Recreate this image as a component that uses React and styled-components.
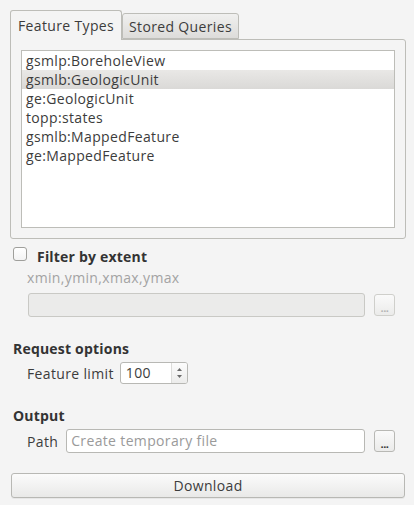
import React from "react";
import styled, { createGlobalStyle } from "styled-components";

const GlobalStyle = createGlobalStyle`
  html, body {
    margin: 0;
    padding: 0;
    background: #f4f4f4;
  }
  body {
    font-family: "Open Sans", "Noto Sans", sans-serif;
    font-size: 14px;
    letter-spacing: 0.35px;
    color: #3c3c3c;
  }
`;

const Panel = styled.div`
  width: 414px;
  height: 505px;
  box-sizing: border-box;
  padding: 10px 8px 0 10px;
  background: #f4f4f4;
  display: flex;
  flex-direction: column;
`;

const TabBar = styled.div`
  display: flex;
  align-items: flex-end;
  height: 29px;
  position: relative;
  z-index: 1;
`;

const Tab = styled.div`
  box-sizing: border-box;
  height: ${(p) => (p.active ? "30px" : "26px")};
  padding: 0 ${(p) => (p.active ? "7px" : "6px")};
  margin-bottom: ${(p) => (p.active ? "-1px" : "0")};
  display: flex;
  align-items: center;
  border: 1px solid #bdbdb8;
  border-bottom: ${(p) => (p.active ? "none" : "1px solid #bdbdb8")};
  border-radius: 3px 3px 0 0;
  background: ${(p) =>
    p.active ? "#f4f4f4" : "linear-gradient(#f0f0ef, #dddcda)"};
  padding-bottom: ${(p) => (p.active ? "1px" : "0")};
  white-space: nowrap;
`;

const TabPane = styled.div`
  box-sizing: border-box;
  height: 200px;
  border: 1px solid #bdbdb8;
  border-radius: 0 3px 3px 3px;
  padding: 10px;
  background: #f4f4f4;
`;

const List = styled.div`
  box-sizing: border-box;
  height: 178px;
  border: 1px solid #bdbdb8;
  background: #fff;
  display: flex;
  flex-direction: column;
`;

const ListItem = styled.div`
  height: 19px;
  line-height: 19px;
  padding-left: 4px;
  white-space: nowrap;
  background: ${(p) =>
    p.selected ? "linear-gradient(#e9e8e6, #dad9d7)" : "transparent"};
`;

const FilterRow = styled.div`
  display: flex;
  align-items: flex-start;
  margin-top: 8px;
  margin-left: 3px;
  height: 18px;
`;

const Check = styled.span`
  box-sizing: border-box;
  width: 14px;
  height: 14px;
  border: 1px solid #9f9f9b;
  border-radius: 3px;
  background: linear-gradient(#ffffff, #f3f3f3);
`;

const Title = styled.div`
  font-weight: bold;
  font-size: 14px;
  letter-spacing: 0.2px;
  line-height: 18px;
  color: #333;
  margin-left: ${(p) => p.indent || 0}px;
  margin-top: ${(p) => p.top || 0}px;
`;

const Hint = styled.div`
  line-height: 18px;
  color: #a3a3a3;
  margin: 4px 0 0 17px;
`;

const FieldRow = styled.div`
  display: flex;
  align-items: center;
  height: ${(p) => p.h || 24}px;
  margin-top: ${(p) => p.top}px;
  padding-left: ${(p) => p.indent}px;
  padding-right: 11px;
  gap: 8px;
`;

const Label = styled.span`
  white-space: nowrap;
`;

const TextField = styled.div`
  box-sizing: border-box;
  flex: 1;
  height: 24px;
  line-height: 22px;
  border: 1px solid ${(p) => (p.disabled ? "#c9c9c5" : "#b8b8b4")};
  border-radius: 3px;
  background: ${(p) => (p.disabled ? "#ebebea" : "#ffffff")};
  color: #9a9a9a;
  padding-left: 4px;
  white-space: nowrap;
  overflow: hidden;
`;

const DotsButton = styled.div`
  box-sizing: border-box;
  width: 21px;
  height: 22px;
  margin-left: 1px;
  border: 1px solid ${(p) => (p.disabled ? "#cfcfcb" : "#b8b8b4")};
  border-radius: 3px;
  background: linear-gradient(#fafafa, #ebebea);
  display: flex;
  align-items: center;
  justify-content: center;
  font-size: 11px;
  font-weight: bold;
  letter-spacing: -0.5px;
  color: ${(p) => (p.disabled ? "#b4b4b4" : "#333")};
  padding-top: 4px;
`;

const SpinBox = styled.div`
  box-sizing: border-box;
  width: 68px;
  height: 22px;
  border: 1px solid #b8b8b4;
  border-radius: 3px;
  background: #fff;
  display: flex;
  margin-left: -2px;
`;

const SpinValue = styled.span`
  flex: 1;
  line-height: 20px;
  padding-left: 5px;
`;

const SpinArrows = styled.span`
  width: 15px;
  border-left: 1px solid #dcdcda;
  background: linear-gradient(#fcfcfc, #ececeb);
  display: flex;
  flex-direction: column;
  align-items: center;
  justify-content: center;
  gap: 4px;
  border-radius: 0 2px 2px 0;
`;

const DownloadButton = styled.div`
  box-sizing: border-box;
  height: 25px;
  margin: 20px 1px 0 1px;
  border: 1px solid #b8b8b4;
  border-radius: 3px;
  background: linear-gradient(#fbfbfb, #e9e9e8);
  display: flex;
  align-items: center;
  justify-content: center;
  box-shadow: 0 1px 0 rgba(0, 0, 0, 0.05);
`;

const featureTypes = [
  "gsmlp:BoreholeView",
  "gsmlb:GeologicUnit",
  "ge:GeologicUnit",
  "topp:states",
  "gsmlb:MappedFeature",
  "ge:MappedFeature",
];

const Arrow = ({ up }) => (
  <svg width="5" height="3" viewBox="0 0 5 3">
    <path d={up ? "M0 3 L2.5 0 L5 3 Z" : "M0 0 L2.5 3 L5 0 Z"} fill="#6a6a6a" />
  </svg>
);

export default function App() {
  return (
    <Panel>
      <GlobalStyle />
      <TabBar>
        <Tab active>Feature Types</Tab>
        <Tab>Stored Queries</Tab>
      </TabBar>
      <TabPane>
        <List>
          {featureTypes.map((name) => (
            <ListItem key={name} selected={name === "gsmlb:GeologicUnit"}>
              {name}
            </ListItem>
          ))}
        </List>
      </TabPane>

      <FilterRow>
        <Check />
        <Title indent={10} top={1}>Filter by extent</Title>
      </FilterRow>
      <Hint>xmin,ymin,xmax,ymax</Hint>
      <FieldRow top={6} indent={18}>
        <TextField disabled />
        <DotsButton disabled>...</DotsButton>
      </FieldRow>

      <Title indent={3} top={23}>Request options</Title>
      <FieldRow top={4} indent={17} h={22}>
        <Label>Feature limit</Label>
        <SpinBox>
          <SpinValue>100</SpinValue>
          <SpinArrows>
            <Arrow up />
            <Arrow />
          </SpinArrows>
        </SpinBox>
      </FieldRow>

      <Title indent={3} top={23}>Output</Title>
      <FieldRow top={4} indent={17}>
        <Label>Path</Label>
        <TextField>Create temporary file</TextField>
        <DotsButton>...</DotsButton>
      </FieldRow>

      <DownloadButton>Download</DownloadButton>
    </Panel>
  );
}
